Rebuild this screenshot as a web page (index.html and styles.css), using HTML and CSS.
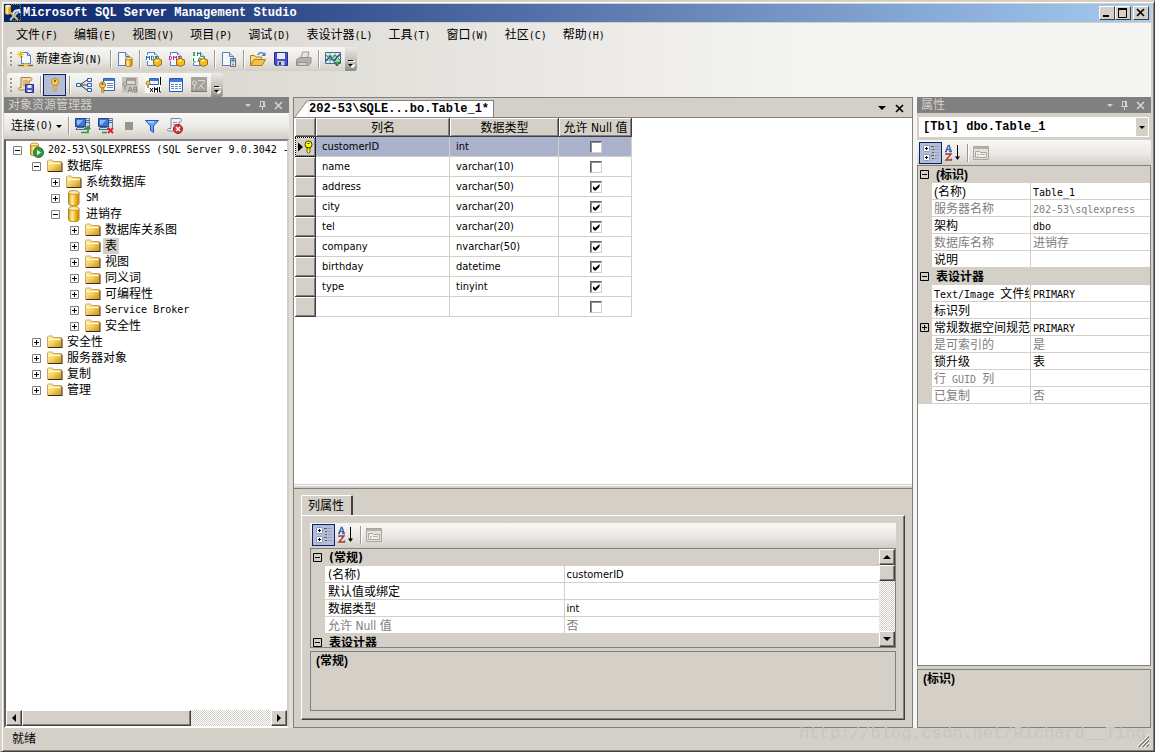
FILE: index.html
```html
<!DOCTYPE html>
<html lang="zh-CN">
<head>
<meta charset="utf-8">
<title>Microsoft SQL Server Management Studio</title>
<link rel="stylesheet" href="styles.css">
</head>
<body>
<svg class="defs" aria-hidden="true">
  <defs>
    <linearGradient id="gold" x1="0" x2="1"><stop offset="0" stop-color="#d99a1c"/><stop offset=".35" stop-color="#fff0a8"/><stop offset=".6" stop-color="#f4c02c"/><stop offset="1" stop-color="#c98300"/></linearGradient>
    <linearGradient id="fold" x1="0" y1="0" x2="1" y2="1"><stop offset="0" stop-color="#fff6c4"/><stop offset=".5" stop-color="#f3cf62"/><stop offset="1" stop-color="#c98a10"/></linearGradient>
  </defs>
  <symbol id="folder" viewBox="0 0 16 16"><path d="M.5 13.500V3l1-1h4l1 1.500h8v10z" fill="url(#fold)" stroke="#d0aa55"/><path d="M1 13.500h14.500M15 4.500v9" stroke="#3d2f10" fill="none"/><path d="M1.500 5.500h12" stroke="#fffbe0"/></symbol>
  <symbol id="db" viewBox="0 0 16 16"><path d="M2.500 2.500v11c0 3 10.500 3 10.500 0v-11z" fill="url(#gold)" stroke="#b9801a"/><ellipse cx="7.750" cy="2.500" rx="5.250" ry="2" fill="#fbe9a8" stroke="#c9952c"/></symbol>
  <symbol id="server" viewBox="0 0 16 16"><path d="M2.500 2.500v9.500c0 2.500 8 2.500 8 0V2.500z" fill="url(#gold)" stroke="#b9801a"/><ellipse cx="6.500" cy="2.500" rx="4" ry="1.500" fill="#fbe9a8" stroke="#c9952c"/><circle cx="10.500" cy="10.500" r="5" fill="#2f9a3c" stroke="#1d6f2a"/><path d="M9 8v5l4-2.500z" fill="#fff"/></symbol>
  <symbol id="page" viewBox="0 0 16 16"><path d="M1.500 1.500h7l4 4v9h-11z" fill="#f4f8ff" stroke="#5c7eb4"/><path d="M8.500 1.500v4h4" fill="#cfdcf2" stroke="#5c7eb4"/></symbol>
  <symbol id="minidb" viewBox="0 0 16 16"><path d="M8.500 7.500v6.500c0 2 6.500 2 6.500 0V7.500z" fill="url(#gold)" stroke="#a87510"/><ellipse cx="11.750" cy="7.500" rx="3.250" ry="1.300" fill="#fbe9a8" stroke="#c08a1c"/></symbol>
  <symbol id="goldcube" viewBox="0 0 16 16"><path d="M11.500 7l4 2v4.500l-4 2-4-2V9z" fill="#f2bd20" stroke="#9b6e00"/><path d="M9 9.500l2.500-1 1.500 1-2.500 1.500z" fill="#fff2a0"/></symbol>
  <symbol id="minus" viewBox="0 0 9 9"><path d="M.5.5h8v8h-8z" fill="#fff" stroke="#808080"/><path d="M2 4.500h5" stroke="#000"/></symbol>
  <symbol id="plus" viewBox="0 0 9 9"><path d="M.5.5h8v8h-8z" fill="#fff" stroke="#808080"/><path d="M2 4.500h5M4.500 2v5" stroke="#000"/></symbol>
  <symbol id="gminus" viewBox="0 0 9 9"><path d="M.5.5h8v8h-8z" fill="none" stroke="#000"/><path d="M2 4.500h5" stroke="#000"/></symbol>
  <symbol id="gplus" viewBox="0 0 9 9"><path d="M.5.5h8v8h-8z" fill="none" stroke="#000"/><path d="M2 4.500h5M4.500 2v5" stroke="#000"/></symbol>
  <symbol id="categorized" viewBox="0 0 18 18"><g fill="#fff" stroke="#7a9ac8"><rect x="1.500" y="1.500" width="6" height="6" rx="1"/><rect x="1.500" y="10.500" width="6" height="6" rx="1"/></g><path d="M3 4.500h3M4.500 3v3M3 13.500h3M4.500 12v3" stroke="#000"/><path d="M9 2.500h3M10 5.500h2M10 8.500h2M9 11.500h3M10 14.500h2" stroke="#555a70"/><path d="M13 2.500h4M13 5.500h4M13 8.500h4M13 11.500h4M13 14.500h4" stroke="#7d9fb8" stroke-dasharray="1.500 .7"/></symbol>
  <symbol id="sortaz" viewBox="0 0 18 18"><path d="M1 7.500h2M5 7.500h3M2 7L4.300 1.500h.8L7 7M3 5.500h3" fill="none" stroke="#3b62ae" stroke-width="1.300"/><path d="M2 11v-1h5L2 16h5.500v-1.500" fill="none" stroke="#a33a3a" stroke-width="1.400"/><path d="M13.500 1v14" stroke="#000"/><path d="M11 12.500h5L13.500 16z"/></symbol>
  <symbol id="proppage" viewBox="0 0 18 18"><path d="M1.500 2.500h15v13h-15z" fill="#e4e2dc" stroke="#aaa69e"/><path d="M2 4h14" stroke="#b4b0a8" stroke-width="2"/><path d="M3.500 13.500v-6h4l1 1h6v5z" fill="#f2f0ea" stroke="#aaa69e"/><path d="M5 10.500h2M8 10.500h5M5 12h1" stroke="#b4b0a8"/></symbol>
  <symbol id="key" viewBox="0 0 16 16"><circle cx="8" cy="5" r="3.500" fill="#f5cf4e" stroke="#b98a30"/><circle cx="8" cy="4" r="1" fill="#6a4a10"/><path d="M7 8.500V13l1 1.500L9.500 13l-.8-1 .8-1-.8-1 .8-1v-.5z" fill="#f5cf4e" stroke="#b98a30" stroke-width=".8"/></symbol>
  <symbol id="monitor" viewBox="0 0 16 16"><path d="M10.500.5h4v11h-4z" fill="#d5dcec" stroke="#6c7a9c"/><path d="M11 2.500h3M11 4.500h3" stroke="#56658a"/><path d="M.5.5h10v8H.5z" fill="#3b76d8" stroke="#24458c"/><path d="M2 2h6L4 6.500H2z" fill="#8cbcf8"/><path d="M1 11.500l1-2h7l1 2z" fill="#d5dcec" stroke="#56658a"/></symbol>
  <symbol id="pin" viewBox="0 0 9 11"><path d="M2.500 1v5M5.500 1v5M6.500 1v5M2 1.500h5M1 6.500h7M4.500 7v3" stroke="#d4d0c8" fill="none"/></symbol>
  <symbol id="cross" viewBox="0 0 9 9"><path d="M1 1l7 7M8 1L1 8" stroke="currentColor" stroke-width="1.700" fill="none"/></symbol>
  <symbol id="down" viewBox="0 0 8 4"><path d="M0 0h8L4 4z" fill="currentColor"/></symbol>
  <symbol id="up" viewBox="0 0 8 4"><path d="M0 4h8L4 0z" fill="currentColor"/></symbol>
  <symbol id="left" viewBox="0 0 4 8"><path d="M4 0v8L0 4z"/></symbol>
  <symbol id="right" viewBox="0 0 4 8"><path d="M0 0v8l4-4z"/></symbol>
  <symbol id="more" viewBox="0 0 8 8"><path d="M2 1.500h6M3 5h5L5.500 8z" stroke="#fff" fill="#fff"/><path d="M1 .5h5" stroke="#000"/><path d="M1 4h5L3.500 6.500z"/></symbol>
</svg>

<div class="window">
  <header class="titlebar">
    <svg class="i18" viewBox="0 0 18 18"><path d="M7 .5h9.500v16H6" fill="none" stroke="#4eae38" stroke-dasharray="1 1"/><path d="M1 2v7c0 2 6 2 6 0V2z" fill="url(#gold)"/><ellipse cx="4" cy="2" rx="3" ry="1.300" fill="#fbe9a8"/><path d="M6 8l8 8" stroke="#e7b53c" stroke-width="2"/><path d="M14 8l-8 8" stroke="#b8c2d2" stroke-width="2"/><path d="M9 10l2-3 4-1 1 3" fill="none" stroke="#e8edf6" stroke-width="2"/></svg>
    <h1>Microsoft SQL Server Management Studio</h1>
    <div class="caption">
      <button class="cap" aria-label="最小化"><svg viewBox="0 0 12 10"><path d="M2 8h6" stroke="#000" stroke-width="2"/></svg></button>
      <button class="cap" aria-label="最大化"><svg viewBox="0 0 12 10"><path d="M1.500 1.500h8v8h-8z" fill="none" stroke="#000"/><path d="M1 1h9" stroke="#000" stroke-width="2"/></svg></button>
      <button class="cap close" aria-label="关闭"><svg viewBox="0 0 12 10"><path d="M2 1l7 7M9 1L2 8" stroke="#000" stroke-width="1.700"/></svg></button>
    </div>
  </header>

  <div class="app">
    <nav class="menu">
      <button>文件<span class="m">(F)</span></button><button>编辑<span class="m">(E)</span></button><button>视图<span class="m">(V)</span></button><button>项目<span class="m">(P)</span></button><button>调试<span class="m">(D)</span></button><button>表设计器<span class="m">(L)</span></button><button>工具<span class="m">(T)</span></button><button>窗口<span class="m">(W)</span></button><button>社区<span class="m">(C)</span></button><button>帮助<span class="m">(H)</span></button>
    </nav>

    <div class="bars">
      <div class="bar floating" role="toolbar" aria-label="标准">
        <span class="grip"></span>
        <button class="tb wide"><svg class="i16" viewBox="0 0 16 16"><path d="M4.500 1.500h6l3 3v8h-9z" fill="#f4f8ff" stroke="#5c7eb4"/><path d="M10.500 1.500v3h3" fill="none" stroke="#5c7eb4"/><path d="M3.500 0v7M0 3.500h7M1 1l5 5M6 1L1 6" stroke="#f2c400"/><path d="M1 14.500h15" stroke="#8a6a20" stroke-width="1.500"/><path d="M7 12.500h4V16H7z" fill="#f5cf4e"/></svg><span>新建查询<span class="m">(N)</span></span></button>
        <span class="sep"></span>
        <button class="tb" aria-label="数据库引擎查询"><svg class="i16"><use href="#page"/><use href="#minidb"/></svg></button>
        <span class="sep"></span>
        <button class="tb" aria-label="MDX 查询"><svg class="i16" viewBox="0 0 16 16"><use href="#page"/><path d="M0 4h9v6H0z" fill="#fff"/><path d="M.5 9V5l1.500 2 1.500-2v4M5.500 5v4h1l1-1.500V6l-1-1zM9 5l2 4M11 5L9 9" fill="none" stroke="#1c6fb8"/><use href="#goldcube"/></svg></button>
        <button class="tb" aria-label="DMX 查询"><svg class="i16" viewBox="0 0 16 16"><use href="#page"/><path d="M0 4h9v6H0z" fill="#fff"/><path d="M.5 5v4h1l1-1.500V6l-1-1zM4.500 9V5L6 7l1.500-2v4M9 5l2 4M11 5L9 9" fill="none" stroke="#c02a94"/><use href="#goldcube"/></svg></button>
        <button class="tb" aria-label="XMLA 查询"><svg class="i16" viewBox="0 0 16 16"><use href="#page"/><path d="M0 0h8v12H0z" fill="#fff"/><path d="M1 1l2 4M3 1L1 5M5.500 5V1L7 3l1.500-2v4M1.500 7v4H4M6 11l1-4h1l1 4M6 9.500h3" fill="none" stroke="#1f8f5c"/><use href="#goldcube"/></svg></button>
        <span class="sep"></span>
        <button class="tb" aria-label="移动查询"><svg class="i16" viewBox="0 0 16 16"><use href="#page"/><path d="M9.500 7.500h5v8h-5z" fill="#dfe3ea" stroke="#5d6b88"/><path d="M10.500 9.500h3" stroke="#2a6fd0" stroke-width="2"/><circle cx="12" cy="13.500" r="1" fill="#c47b00"/></svg></button>
        <span class="sep"></span>
        <button class="tb" aria-label="打开文件"><svg class="i16" viewBox="0 0 16 16"><path d="M.5 14V4.500h4l1 1.500h6v3" fill="#f8e08a" stroke="#ad7f1c"/><path d="M.5 14.500L4 8.500h11.500L12 14.500z" fill="#f2c14a" stroke="#ad7f1c"/><path d="M8 4c1-3 4-3 6-1" fill="none" stroke="#4b79bd" stroke-width="1.300"/><path d="M15.500 1v4h-4z" fill="#4b79bd"/></svg></button>
        <button class="tb" aria-label="保存"><svg class="i16" viewBox="0 0 16 16"><path d="M1.500 1.500h13v13h-12l-1-1z" fill="#4a4ec8" stroke="#2b2c86"/><path d="M4 2h8v6H4z" fill="#e6ebfb"/><path d="M4.500 10h7v4.500h-7z" fill="#c9cdf0"/><path d="M6 11h2v3H6z" fill="#2b2c86"/></svg></button>
        <button class="tb" aria-label="打印" disabled><svg class="i16" viewBox="0 0 16 16"><path d="M5 7l1.500-6H13l-1.500 6" fill="#e6e4df" stroke="#9d9a94"/><path d="M.5 8.500L4 6.500h11v5l-2.500 3H.5z" fill="#b3b0aa" stroke="#96938d"/><path d="M2 11.500h9v3H2z" fill="#d4d1cb" stroke="#96938d"/></svg></button>
        <span class="sep"></span>
        <button class="tb" aria-label="活动监视器"><svg class="i16" viewBox="0 0 16 16"><path d="M.5 1.500h15v11H.5z" fill="#dff0e4" stroke="#3f6a9a"/><path d="M1 5h14M1 9h14M5 2v10M10 2v10" stroke="#7fae9c"/><path d="M1 10l4-5 4 5 6-7" fill="none" stroke="#1d4fae" stroke-width="1.300"/><path d="M1 4l5 5 4-5 5 5" fill="none" stroke="#2e8b3a"/><path d="M9 11l3 4 4-5" fill="#35a33a" stroke="#1e6e24"/></svg></button>
        <button class="over" aria-label="工具栏选项"><svg class="i8"><use href="#more"/></svg></button>
      </div>
      <div class="bar floating" role="toolbar" aria-label="表设计器">
        <span class="grip"></span>
        <button class="tb" aria-label="生成更改脚本"><svg class="i16" viewBox="0 0 16 16"><path d="M3 .5h9c2.500 0 2.500 3.500 0 3.500H11v9H2c-2 0-2-2.500 0-2.500h1z" fill="#f3dda6" stroke="#a8803a"/><path d="M5 4h5M5 6h5M5 8h3" stroke="#b98f48"/><path d="M7.500 7.500h8v8h-8z" fill="#4a5cc8" stroke="#2b2c86"/><path d="M9.500 8h4v3h-4zM9.500 13h4v2h-4z" fill="#e6ebfb"/></svg></button>
        <span class="sep"></span>
        <button class="tb on" aria-label="设置主键" aria-pressed="true"><svg class="i16"><use href="#key"/></svg></button>
        <span class="sep"></span>
        <button class="tb" aria-label="关系"><svg class="i16" viewBox="0 0 16 16"><path d="M4 8l7-5M4 8h7M4 8l7 5" stroke="#333"/><g fill="#e8f1ff" stroke="#2f5fb0"><path d="M.5 6.500h4v3h-4zM11.500 1.500h4v3h-4zM11.500 6.500h4v3h-4zM11.500 11.500h4v3h-4z"/></g></svg></button>
        <button class="tb" aria-label="管理索引和键"><svg class="i16" viewBox="0 0 16 16"><path d="M4.500 1.500h11v12h-11z" fill="#fff" stroke="#2f5fb0"/><path d="M5 3h10" stroke="#3f7bd8" stroke-width="2"/><path d="M8 6.500h6M8 8.500h6M8 10.500h6" stroke="#6c87b8"/><circle cx="3.500" cy="8" r="3" fill="#f5cf4e" stroke="#a87920"/><circle cx="3.500" cy="7" r="1" fill="#6a4a10"/><path d="M2.500 11v4l1 1 1.500-1v-4z" fill="#e2aa2c" stroke="#a87920" stroke-width=".6"/></svg></button>
        <button class="tb" aria-label="管理全文检索" disabled><svg class="i16" viewBox="0 0 16 16"><path d="M0 0h16v16H0z" fill="#c9c6bf"/><path d="M4.500 1.500h9v6h-9z" fill="#dedbd5" stroke="#96938d"/><path d="M5 3h8" stroke="#a5a29c" stroke-width="2"/><circle cx="3" cy="7" r="2" fill="none" stroke="#96938d"/><path d="M3 9v4M6 15l2-5h.5l2 5M7 13.500h3M12 10v5h2.500v-5zM12 12.500h2.500" stroke="#8a8781" fill="none"/></svg></button>
        <button class="tb" aria-label="管理 XML 索引"><svg class="i16" viewBox="0 0 16 16"><path d="M0 0h16v16H0z" fill="#fff"/><path d="M4.500 1.500h9v6h-9z" fill="#eef4ff" stroke="#2f5fb0"/><path d="M5 3h8" stroke="#3f7bd8" stroke-width="2"/><circle cx="3" cy="6" r="2" fill="#f5cf4e" stroke="#a87920"/><path d="M3 8v3" stroke="#a87920" stroke-width="1.500"/><path d="M5 11l3 4M8 11l-3 4M9.500 15.500v-5L11 13l1.500-2.500v5M14.500 10v5H16M15.500 0v8" stroke="#000" fill="none"/></svg></button>
        <button class="tb" aria-label="管理 CHECK 约束"><svg class="i16" viewBox="0 0 16 16"><path d="M1.500 1.500h13v13h-13z" fill="#fff" stroke="#2459b4"/><path d="M2 3.500h12" stroke="#3f7bd8" stroke-width="3"/><path d="M3 7.500h10M3 9.500h10M3 11.500h10" stroke="#5a8ad0" stroke-dasharray="3 1"/></svg></button>
        <button class="tb" aria-label="空间索引" disabled><svg class="i16" viewBox="0 0 16 16"><path d="M0 0h16v15H0z" fill="#a5a29c"/><circle cx="3.500" cy="6" r="2" fill="none" stroke="#e0ddd7"/><path d="M3.500 8v4M7 3.500h7M7 12l7-8M9 8l4 4" stroke="#dedbd5" fill="none"/><path d="M0 14.500h16" stroke="#7c7973"/></svg></button>
        <button class="over" aria-label="工具栏选项"><svg class="i8"><use href="#more"/></svg></button>
      </div>
    </div>

    <main class="panes">
      <section class="pane explorer">
        <div class="panehead"><h2>对象资源管理器</h2><button aria-label="窗口位置"><svg class="tiny"><use href="#down"/></svg></button><button aria-label="自动隐藏"><svg class="pin"><use href="#pin"/></svg></button><button aria-label="关闭"><svg class="x9"><use href="#cross"/></svg></button></div>
        <div class="bar tall" role="toolbar" aria-label="对象资源管理器">
          <button class="tb connect">连接<span class="m">(O)</span><svg class="tiny"><use href="#down"/></svg></button>
          <span class="sep"></span>
          <button class="tb" aria-label="连接"><svg class="i16" viewBox="0 0 16 16"><use href="#monitor"/><path d="M6 14.500h7V10" fill="none" stroke="#2d9a2d" stroke-width="1.600"/><path d="M10 11h6l-3-4z" fill="#2d9a2d"/></svg></button>
          <button class="tb" aria-label="断开连接"><svg class="i16" viewBox="0 0 16 16"><use href="#monitor"/><path d="M4 14.500h5" stroke="#2d9a2d" stroke-width="1.600"/><path d="M10 10l5 5M15 10l-5 5" stroke="#e02020" stroke-width="2"/></svg></button>
          <button class="tb" aria-label="停止" disabled><svg class="i16" viewBox="0 0 16 16"><path d="M4 4h8v8H4z" fill="#98958f"/></svg></button>
          <button class="tb" aria-label="筛选"><svg class="i16" viewBox="0 0 16 16"><path d="M1.500 2.500h13L9.500 8v6.500l-3-2V8z" fill="#6aa2ee" stroke="#2459c0"/><path d="M4 4h6" stroke="#d8e8ff"/></svg></button>
          <button class="tb" aria-label="刷新"><svg class="i16" viewBox="0 0 16 16"><path d="M4 .5h9c2 0 2 3.500 0 3.500h-1v9H2c-2 0-2-2.500 0-2.500h2z" fill="#eef0f4" stroke="#7d8698"/><path d="M6 4.500h4M6 6.500h4" stroke="#8a93a6"/><circle cx="11" cy="11" r="4.500" fill="#d93838" stroke="#a01818"/><path d="M9 9l4 4M13 9l-4 4" stroke="#fff" stroke-width="1.400"/></svg></button>
        </div>
        <div class="treebox">
          <ul class="tree">
            <li><div class="node"><button aria-label="折叠"><svg><use href="#minus"/></svg></button><svg class="i16"><use href="#server"/></svg><span class="m">202-53\SQLEXPRESS (SQL Server 9.0.3042 -</span></div>
              <ul>
                <li><div class="node"><button aria-label="折叠"><svg><use href="#minus"/></svg></button><svg class="i16"><use href="#folder"/></svg><span>数据库</span></div>
                  <ul>
                    <li><div class="node"><button aria-label="展开"><svg><use href="#plus"/></svg></button><svg class="i16"><use href="#folder"/></svg><span>系统数据库</span></div></li>
                    <li><div class="node"><button aria-label="展开"><svg><use href="#plus"/></svg></button><svg class="i16"><use href="#db"/></svg><span class="m">SM</span></div></li>
                    <li><div class="node"><button aria-label="折叠"><svg><use href="#minus"/></svg></button><svg class="i16"><use href="#db"/></svg><span>进销存</span></div>
                      <ul>
                        <li><div class="node"><button aria-label="展开"><svg><use href="#plus"/></svg></button><svg class="i16"><use href="#folder"/></svg><span>数据库关系图</span></div></li>
                        <li><div class="node"><button aria-label="展开"><svg><use href="#plus"/></svg></button><svg class="i16"><use href="#folder"/></svg><span class="picked">表</span></div></li>
                        <li><div class="node"><button aria-label="展开"><svg><use href="#plus"/></svg></button><svg class="i16"><use href="#folder"/></svg><span>视图</span></div></li>
                        <li><div class="node"><button aria-label="展开"><svg><use href="#plus"/></svg></button><svg class="i16"><use href="#folder"/></svg><span>同义词</span></div></li>
                        <li><div class="node"><button aria-label="展开"><svg><use href="#plus"/></svg></button><svg class="i16"><use href="#folder"/></svg><span>可编程性</span></div></li>
                        <li><div class="node"><button aria-label="展开"><svg><use href="#plus"/></svg></button><svg class="i16"><use href="#folder"/></svg><span class="m">Service Broker</span></div></li>
                        <li><div class="node"><button aria-label="展开"><svg><use href="#plus"/></svg></button><svg class="i16"><use href="#folder"/></svg><span>安全性</span></div></li>
                      </ul>
                    </li>
                  </ul>
                </li>
                <li><div class="node"><button aria-label="展开"><svg><use href="#plus"/></svg></button><svg class="i16"><use href="#folder"/></svg><span>安全性</span></div></li>
                <li><div class="node"><button aria-label="展开"><svg><use href="#plus"/></svg></button><svg class="i16"><use href="#folder"/></svg><span>服务器对象</span></div></li>
                <li><div class="node"><button aria-label="展开"><svg><use href="#plus"/></svg></button><svg class="i16"><use href="#folder"/></svg><span>复制</span></div></li>
                <li><div class="node"><button aria-label="展开"><svg><use href="#plus"/></svg></button><svg class="i16"><use href="#folder"/></svg><span>管理</span></div></li>
              </ul>
            </li>
          </ul>
          <div class="hscroll"><button class="sb" aria-label="向左"><svg class="ha"><use href="#left"/></svg></button><div class="thumb"></div><span class="rest"></span><button class="sb" aria-label="向右"><svg class="ha"><use href="#right"/></svg></button></div>
        </div>
      </section>

      <section class="pane document">
        <div class="doctabs">
          <svg class="slant" viewBox="0 0 14 18"><path d="M0 18L12 2l2-1.500V18z" fill="#fff"/><path d="M0 17.500L11.500 2l2.500-1.500" fill="none" stroke="#808080"/></svg>
          <button class="doctab">202-53\SQLE...bo.Table_1*</button>
          <span class="grow"></span>
          <button aria-label="活动文件"><svg class="arrow"><use href="#down"/></svg></button>
          <button aria-label="关闭"><svg class="x9"><use href="#cross"/></svg></button>
        </div>
        <div class="sheet">
          <table class="cols">
            <colgroup><col class="c0"><col class="c1"><col class="c2"><col class="c3"></colgroup>
            <thead><tr><th></th><th>列名</th><th>数据类型</th><th>允许 Null 值</th></tr></thead>
            <tbody>
              <tr class="current"><th><svg class="rowmark" viewBox="0 0 18 16"><path d="M2 3.500v9L7 8z"/><circle cx="12.500" cy="5.500" r="3.500" fill="#ff0" stroke="#3a3a00"/><path d="M11 9v4l1.500 1.500L14 13V9z" fill="#ff0" stroke="#3a3a00" stroke-width=".8"/><path d="M11.500 4.500h2" stroke="#3a3a00"/></svg></th><td>customerID</td><td>int</td><td><input type="checkbox" aria-label="customerID 允许 Null"></td></tr>
              <tr><th></th><td>name</td><td>varchar(10)</td><td><input type="checkbox" aria-label="name 允许 Null"></td></tr>
              <tr><th></th><td>address</td><td>varchar(50)</td><td><input type="checkbox" checked aria-label="address 允许 Null"></td></tr>
              <tr><th></th><td>city</td><td>varchar(20)</td><td><input type="checkbox" checked aria-label="city 允许 Null"></td></tr>
              <tr><th></th><td>tel</td><td>varchar(20)</td><td><input type="checkbox" checked aria-label="tel 允许 Null"></td></tr>
              <tr><th></th><td>company</td><td>nvarchar(50)</td><td><input type="checkbox" checked aria-label="company 允许 Null"></td></tr>
              <tr><th></th><td>birthday</td><td>datetime</td><td><input type="checkbox" checked aria-label="birthday 允许 Null"></td></tr>
              <tr><th></th><td>type</td><td>tinyint</td><td><input type="checkbox" checked aria-label="type 允许 Null"></td></tr>
              <tr><th></th><td></td><td></td><td><input type="checkbox" aria-label="新列 允许 Null"></td></tr>
            </tbody>
          </table>
        </div>
        <div class="splitter"></div>
        <div class="details">
          <button class="proptab">列属性</button>
          <div class="proppage">
            <div class="bar small" role="toolbar" aria-label="列属性">
              <button class="tb on" aria-label="按分类顺序"><svg class="i18"><use href="#categorized"/></svg></button>
              <button class="tb" aria-label="字母顺序"><svg class="i18"><use href="#sortaz"/></svg></button>
              <span class="sep"></span>
              <button class="tb" aria-label="属性页" disabled><svg class="i18"><use href="#proppage"/></svg></button>
            </div>
            <div class="colprops">
              <div class="clip">
                <table class="pg sans">
                  <colgroup><col class="gutter"><col class="wname"><col></colgroup>
                  <tbody>
                    <tr class="cat"><td><svg class="x9"><use href="#gminus"/></svg></td><th colspan="2">(常规)</th></tr>
                    <tr><td></td><th>(名称)</th><td>customerID</td></tr>
                    <tr><td></td><th>默认值或绑定</th><td></td></tr>
                    <tr><td></td><th>数据类型</th><td>int</td></tr>
                    <tr class="off"><td></td><th>允许 Null 值</th><td class="zh">否</td></tr>
                    <tr class="cat"><td><svg class="x9"><use href="#gminus"/></svg></td><th colspan="2">表设计器</th></tr>
                  </tbody>
                </table>
              </div>
              <div class="vscroll"><button class="sb" aria-label="向上"><svg class="va"><use href="#up"/></svg></button><div class="thumb"></div><span class="rest"></span><button class="sb" aria-label="向下"><svg class="va"><use href="#down"/></svg></button></div>
            </div>
            <div class="note">(常规)</div>
          </div>
        </div>
      </section>

      <section class="pane properties">
        <div class="panehead"><h2>属性</h2><button aria-label="窗口位置"><svg class="tiny"><use href="#down"/></svg></button><button aria-label="自动隐藏"><svg class="pin"><use href="#pin"/></svg></button><button aria-label="关闭"><svg class="x9"><use href="#cross"/></svg></button></div>
        <div class="combo"><select aria-label="对象"><option>[Tbl] dbo.Table_1</option></select><span class="drop"><svg class="tiny"><use href="#down"/></svg></span></div>
        <div class="bar small" role="toolbar" aria-label="属性">
          <button class="tb on" aria-label="按分类顺序"><svg class="i18"><use href="#categorized"/></svg></button>
          <button class="tb" aria-label="字母顺序"><svg class="i18"><use href="#sortaz"/></svg></button>
          <span class="sep"></span>
          <button class="tb" aria-label="属性页" disabled><svg class="i18"><use href="#proppage"/></svg></button>
        </div>
        <div class="pgbox">
          <table class="pg">
            <colgroup><col class="gutter"><col class="nname"><col></colgroup>
            <tbody>
              <tr class="cat"><td><svg class="x9"><use href="#gminus"/></svg></td><th colspan="2">(标识)</th></tr>
              <tr><td></td><th>(名称)</th><td><span class="m">Table_1</span></td></tr>
              <tr class="off"><td></td><th>服务器名称</th><td><span class="m">202-53\sqlexpress</span></td></tr>
              <tr><td></td><th>架构</th><td><span class="m">dbo</span></td></tr>
              <tr class="off"><td></td><th>数据库名称</th><td>进销存</td></tr>
              <tr><td></td><th>说明</th><td></td></tr>
              <tr class="cat"><td><svg class="x9"><use href="#gminus"/></svg></td><th colspan="2">表设计器</th></tr>
              <tr><td></td><th><span class="m">Text/Image </span>文件组</th><td><span class="m">PRIMARY</span></td></tr>
              <tr><td></td><th>标识列</th><td></td></tr>
              <tr><td><svg class="x9"><use href="#gplus"/></svg></td><th>常规数据空间规范</th><td><span class="m">PRIMARY</span></td></tr>
              <tr class="off"><td></td><th>是可索引的</th><td>是</td></tr>
              <tr><td></td><th>锁升级</th><td>表</td></tr>
              <tr class="off"><td></td><th>行<span class="m"> GUID </span>列</th><td></td></tr>
              <tr class="off"><td></td><th>已复制</th><td>否</td></tr>
            </tbody>
          </table>
        </div>
        <div class="note">(标识)</div>
      </section>
    </main>
  </div>

  <footer class="status"><span>就绪</span>
    <svg class="sizer" viewBox="0 0 12 12"><path d="M0 12L12 0M4 12l8-8M8 12l4-4" stroke="#fff"/><path d="M1 12L12 1M2 12L12 2M5 12l7-7M6 12l6-6M9 12l3-3M10 12l2-2" stroke="#808080"/></svg>
  </footer>
  <div class="watermark">http://blog.csdn.net/Richard__Ting</div>
</div>
</body>
</html>
```

FILE: styles.css
```css
* { box-sizing: border-box; }
body {
  margin: 0;
  font: 12px/16px "Liberation Sans", "Noto Sans CJK SC", sans-serif;
  color: #000;
}
button {
  margin: 0;
  padding: 0;
  border: 0;
  background: none;
  font: inherit;
  color: inherit;
}
h1, h2 { margin: 0; font-size: 12px; }
ul { margin: 0; padding: 0; list-style: none; }
svg { display: block; flex: none; }
.defs { width: 0; height: 0; position: absolute; }
.m { font-family: "DejaVu Sans Mono", "Liberation Mono", monospace; font-size: 10px; line-height: 10px; white-space: pre; }
.grow { flex: 1; }
.i16 { width: 16px; height: 16px; }
.i18 { width: 18px; height: 18px; }
.i8 { width: 8px; height: 8px; }
.x9 { width: 9px; height: 9px; }
.arrow { width: 8px; height: 4px; }
.tiny { width: 6px; height: 3px; }
.pin { width: 9px; height: 11px; }
.ha { width: 4px; height: 8px; }
.va { width: 8px; height: 4px; }

.window {
  position: relative;
  display: flex;
  flex-direction: column;
  height: 100vh;
  padding: 2px 3px 2px 2px;
  background: #d4d0c8;
  border: 1px solid #d4d0c8;
  border-right-color: #404040;
  border-bottom-color: #404040;
  box-shadow: inset 1px 1px #fff, inset -1px -1px #808080;
  border-top-width: 2px;
  border-left-width: 2px;
}
.titlebar {
  display: flex;
  align-items: center;
  height: 18px;
  padding-right: 2px;
  background: linear-gradient(90deg, #0a246a, #a6caf0);
  color: #fff;
}
.titlebar h1 { flex: 1; font-family: "Liberation Mono", monospace; font-size: 12px; }
.titlebar .i18 { margin-right: 1px; }
.caption { display: flex; }
.cap {
  width: 16px;
  height: 14px;
  background: #d4d0c8;
  border: 1px solid;
  border-color: #fff #404040 #404040 #fff;
}
.cap svg { width: 12px; height: 10px; margin: 0 1px; }
.close { margin-left: 2px; }

.app {
  flex: 1;
  min-height: 0;
  display: flex;
  flex-direction: column;
  border-top: 1px solid #d4d0c8;
  background: linear-gradient(90deg, #d4d0c8, #f5f5f3 72%);
}
.menu { display: flex; height: 23px; padding-left: 4px; }
.menu button { padding: 0 8px; white-space: nowrap; }
.bars { display: flex; flex-direction: column; align-items: flex-start; gap: 2px; padding: 1px 3px 0; }
.bar {
  display: flex;
  align-items: center;
  flex: none;
  height: 25px;
  background: linear-gradient(#f7f7f5, #ebe9e5 55%, #d3cfc7);
}
.tall { height: 26px; }
.floating { height: 24px; border-radius: 3px; }
.grip {
  width: 2px;
  height: 15px;
  margin: 0 2px 0 3px;
  background: repeating-linear-gradient(#9c988f 0 2px, transparent 2px 4px);
}
.tb {
  display: flex;
  align-items: center;
  justify-content: center;
  width: 23px;
  height: 22px;
  border: 1px solid transparent;
  white-space: nowrap;
}
.tb.on { background: #b6bdd2; border-color: #0a246a; }
.wide { width: auto; gap: 3px; padding: 0 4px 0 2px; }
.connect { width: auto; padding: 0 2px 0 6px; }
.connect .tiny { margin-left: 3px; }
.sep { width: 1px; height: 18px; margin: 0 2px 0 3px; background: #9c988f; box-shadow: 1px 0 #fff; }
.over {
  display: flex;
  align-items: flex-end;
  justify-content: center;
  width: 12px;
  height: 24px;
  margin-left: 1px;
  padding-bottom: 3px;
  border-radius: 0 3px 3px 0;
  background: linear-gradient(#ebe9e5, #c0bdb6 60%, #8c8a85);
}

.panes {
  flex: 1;
  min-height: 0;
  display: grid;
  grid-template-columns: 285px minmax(0, 1fr) 234px;
  gap: 4px;
}
.pane { display: flex; flex-direction: column; min-width: 0; min-height: 0; background: #d4d0c8; }
.panehead {
  display: flex;
  align-items: center;
  gap: 7px;
  flex: none;
  height: 16px;
  padding: 0 6px 0 4px;
  background: #808080;
  color: #d4d0c8;
}
.panehead h2 { flex: 1; font-weight: 400; }

.treebox {
  flex: 1;
  min-height: 0;
  display: flex;
  flex-direction: column;
  background: #fff;
  border: 2px solid;
  border-color: #808080 #d4d0c8 #fff #606060;
  overflow: hidden;
}
.tree { flex: 1; min-height: 0; padding: 1px 0 0 7px; overflow: hidden; }
.tree ul { padding-left: 19px; }
.node { display: flex; align-items: center; height: 16px; white-space: nowrap; }
.node button { margin-right: 6px; }
.node button svg { width: 9px; height: 9px; }
.node .i16 { margin-right: 4px; }
.picked { background: #d4d0c8; padding: 0 2px; margin: 0 -2px; }

.hscroll { display: flex; height: 16px; }
.vscroll { display: flex; flex-direction: column; width: 16px; }
.sb, .thumb {
  background: #d4d0c8;
  border: 1px solid;
  border-color: #fff #404040 #404040 #fff;
  box-shadow: inset -1px -1px #808080;
}
.sb { display: flex; align-items: center; justify-content: center; width: 16px; height: 16px; flex: none; }
.hscroll .thumb { width: 60%; }
.vscroll .thumb { height: 16px; }
.rest { flex: 1; background: repeating-conic-gradient(#d4d0c8 0 25%, #fff 0 50%) 0 0 / 2px 2px; }

.document { border: 1px solid #808080; }
.doctabs { display: flex; align-items: flex-end; flex: none; height: 20px; padding: 0 8px 0 1px; border-bottom: 1px solid #808080; }
.doctabs > button:not(.doctab) { height: 18px; margin-left: 9px; }
.slant { width: 14px; height: 17px; }
.doctab {
  height: 17px;
  padding: 0 4px 0 0;
  background: #fff;
  border-top: 1px solid #808080;
  border-right: 1px solid #808080;
  font: bold 12px/16px "Liberation Mono", monospace;
}
.sheet { flex: 1; min-height: 0; padding-left: 1px; background: #fff; overflow: hidden; }
.cols { width: 337px; border-collapse: collapse; table-layout: fixed; font: 11px/16px "DejaVu Sans Condensed", "Noto Sans CJK SC", sans-serif; }
.c0 { width: 21px; }
.c1 { width: 134px; }
.c2 { width: 109px; }
.c3 { width: 73px; }
.cols th, .cols td { height: 20px; padding: 0 6px; border: 0; }
.cols th {
  padding: 0;
  background: #d4d0c8;
  font-weight: 400;
  box-shadow: inset -1px -1px #404040, inset 1px 1px #fff, inset -2px -2px #808080;
}
.cols thead th { height: 19px; font-size: 12px; line-height: 16px; }
.cols td { box-shadow: inset -1px -1px #d4d0c8; }
.cols td:last-child { padding: 0; text-align: center; }
.cols .current td { background: #aab2ce; }
.cols .current th { outline: 1px dotted #000; outline-offset: -1px; }
.rowmark { width: 18px; height: 16px; margin-left: 1px; }
input[type="checkbox"] {
  appearance: none;
  display: block;
  width: 12px;
  height: 12px;
  margin: 0 auto;
  background: #fff;
  border: 1px solid;
  border-color: #606060 #d4d0c8 #d4d0c8 #606060;
  box-shadow: inset 1px 1px #909090;
}
input[type="checkbox"]:checked::before {
  content: "";
  display: block;
  width: 7px;
  height: 7px;
  margin: 2px;
  background: #000;
  clip-path: polygon(0 25%, 38% 58%, 100% 0, 100% 40%, 38% 100%, 0 66%);
}
.splitter { flex: none; height: 5px; background: #d4d0c8; border-bottom: 1px solid #808080; box-shadow: inset 0 1px #d4d0c8, inset 0 2px #fff; }

.details { flex: none; display: flex; flex-direction: column; align-items: flex-start; padding: 6px 7px 7px; }
.proptab {
  height: 20px;
  padding: 0 7px 0 6px;
  border: 1px solid #fff;
  border-right: 2px solid #404040;
  border-bottom: 0;
  border-radius: 2px 2px 0 0;
}
.proppage {
  align-self: stretch;
  display: flex;
  flex-direction: column;
  padding: 7px 8px 8px;
  border: 1px solid #fff;
  border-right-color: #404040;
  border-bottom-color: #404040;
  box-shadow: inset -1px -1px #808080;
}
.small { height: 24px; padding-left: 2px; }
.small .tb:not(.on) { width: 22px; }
.colprops { display: flex; height: 100px; margin-top: 1px; border: 1px solid #808080; }
.clip { flex: 1; min-width: 0; overflow: hidden; }

.pg { width: 100%; border-collapse: collapse; table-layout: fixed; line-height: 16px; }
.pg tr { background: #fff; }
.pg td, .pg th {
  height: 17px;
  padding: 0 0 0 2px;
  border: 0;
  font-weight: 400;
  text-align: left;
  white-space: nowrap;
  overflow: hidden;
  box-shadow: inset 0 -1px #d4d0c8;
}
.pg th + td { box-shadow: inset 1px -1px #d4d0c8; padding-left: 3px; }
.pg td:first-child { background: #d4d0c8; padding-left: 2px; }
.pg .cat { background: #d4d0c8; }
.pg .cat th { font-weight: 700; padding-left: 4px; }
.pg .off { color: #808080; }
.sans th { padding-left: 3px; }
.sans td, .sans th { font-family: "DejaVu Sans Condensed", "Noto Sans CJK SC", sans-serif; }
.sans td { font-size: 11px; }
.sans .zh { font-size: 12px; }
.gutter { width: 14px; }
.wname { width: 42%; }
.nname { width: 98px; }
.note { height: 59px; padding: 1px 6px; font-weight: 700; border: 1px solid #808080; }
.proppage .note { margin-top: 3px; height: 60px; padding: 1px 5px; }

.combo { position: relative; flex: none; padding: 4px 2px 3px; }
.combo select {
  display: block;
  width: 100%;
  height: 20px;
  padding: 0 16px 0 4px;
  appearance: none;
  border: 0;
  border-radius: 0;
  background: #fff;
  color: #000;
  font: bold 12px/18px "Liberation Mono", monospace;
}
.drop {
  position: absolute;
  right: 3px;
  top: 5px;
  display: flex;
  align-items: center;
  justify-content: center;
  width: 12px;
  height: 18px;
  background: #d4d0c8;
  pointer-events: none;
}
.properties .small { height: 25px; }
.pgbox { flex: 1; min-height: 0; background: #fff; border: 1px solid #808080; overflow: hidden; }
.properties .note { flex: none; margin-top: 3px; padding: 1px 5px; }

.status { display: flex; align-items: center; justify-content: space-between; flex: none; height: 21px; padding: 0 2px 0 8px; }
.sizer { width: 12px; height: 12px; align-self: flex-end; margin-bottom: 2px; }
.watermark {
  position: absolute;
  right: 8px;
  bottom: 7px;
  font: 17px/20px "Liberation Mono", monospace;
  color: #c8c5bd;
  pointer-events: none;
}
```
